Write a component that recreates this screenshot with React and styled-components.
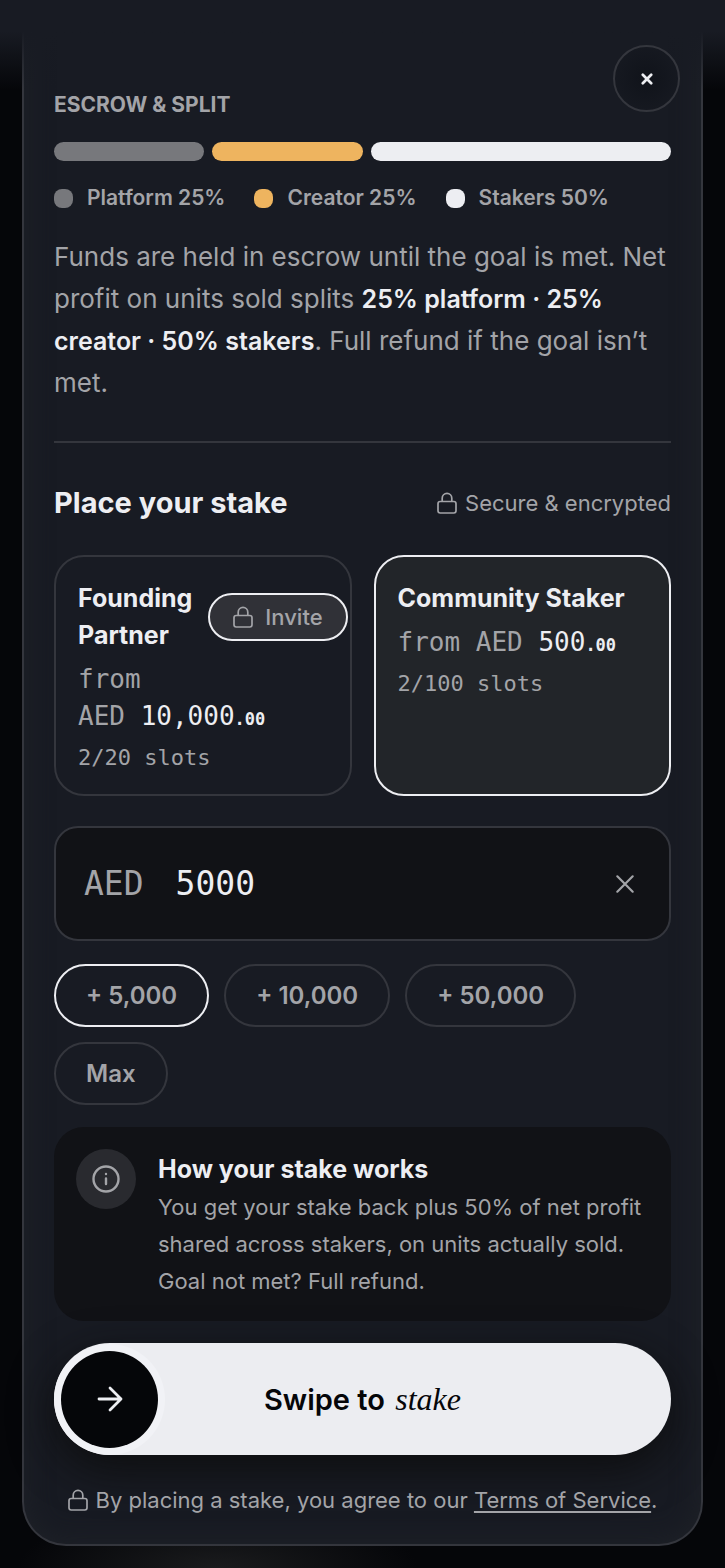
import React, { useState } from "react";
import styled, { createGlobalStyle } from "styled-components";

const colors = {
  page: "#050609",
  panel: "#181b23",
  line: "#34363d",
  well: "#111216",
  text: "#edeef2",
  muted: "#a3a4a8",
  platform: "#77787c",
  creator: "#eeb45f",
};

const sans = `Inter, "Liberation Sans", sans-serif`;
const mono = `"DejaVu Sans Mono", "Liberation Mono", monospace`;

const GlobalStyle = createGlobalStyle`
  * {
    box-sizing: border-box;
  }

  body {
    margin: 0;
    background: ${colors.page};
    color: ${colors.muted};
    font-family: ${sans};
  }

  button, input {
    font-family: inherit;
    color: inherit;
  }

  h2, h3, p {
    margin: 0;
  }
`;

const Page = styled.div`
  position: relative;
  padding: 0 22px 22px;
  background: radial-gradient(ellipse 200px 60px at 30% 100%, #1a1b1d, transparent);
`;

const Panel = styled.main`
  display: flex;
  flex-direction: column;
  padding: 91px 30px 29px;
  border: 2px solid ${colors.line};
  border-top: 0;
  border-radius: 0 0 44px 44px;
  background: ${colors.panel};
  box-shadow: inset 0 0 28px #1f2228;
`;

const TopFade = styled.div`
  position: absolute;
  top: 0;
  left: 0;
  right: 0;
  height: 90px;
  background: linear-gradient(${colors.panel} 35%, transparent);
`;

const CloseBtn = styled.button`
  position: absolute;
  top: 45px;
  right: 45px;
  display: flex;
  align-items: center;
  justify-content: center;
  width: 67px;
  height: 67px;
  padding: 0;
  border: 2px solid ${colors.line};
  border-radius: 50%;
  background: radial-gradient(#10131a, #181b23);
  color: ${colors.text};
`;

const Eyebrow = styled.h2`
  font-size: 21px;
  line-height: 28px;
  font-weight: 700;
  text-transform: uppercase;
`;

const SplitBar = styled.div`
  display: flex;
  gap: 8px;
  margin-top: 23px;
`;

const Segment = styled.div`
  flex: ${(props) => props.$share} 1 0;
  height: 19px;
  border-radius: 10px;
  background: ${(props) => props.$color};
`;

const Legend = styled.div`
  display: flex;
  gap: 29px;
  margin-top: 23px;
  font-size: 21px;
  line-height: 28px;
  font-weight: 600;
`;

const LegendItem = styled.span`
  display: flex;
  align-items: center;
  gap: 14px;
  white-space: nowrap;
`;

const Dot = styled.span`
  width: 19px;
  height: 19px;
  border-radius: 8px;
  background: ${(props) => props.$color};
`;

const Summary = styled.p`
  margin-top: 24px;
  padding-bottom: 37px;
  border-bottom: 2px solid ${colors.line};
  font-size: 26px;
  line-height: 42px;

  strong {
    color: ${colors.text};
    font-size: 25px;
    line-height: 1;
    font-weight: 600;
  }
`;

const StakeHeader = styled.div`
  display: flex;
  align-items: center;
  justify-content: space-between;
  margin-top: 40px;
`;

const StakeTitle = styled.h2`
  color: ${colors.text};
  font-size: 29px;
  line-height: 40px;
  font-weight: 700;
`;

const Secure = styled.span`
  display: flex;
  align-items: center;
  gap: 8px;
  font-size: 22px;
  line-height: 28px;
  white-space: nowrap;
`;

const Tiers = styled.div`
  display: grid;
  grid-template-columns: 1fr 1fr;
  gap: 22px;
  margin-top: 32px;
`;

const Tier = styled.button`
  display: flex;
  flex-direction: column;
  min-width: 0;
  padding: 23px 22px 18px;
  border: 2px solid ${(props) => (props.$active ? colors.text : colors.line)};
  border-radius: 30px;
  background: ${(props) => (props.$active ? "#222529" : "transparent")};
  text-align: left;
`;

const TierTop = styled.span`
  display: flex;
  align-items: center;
  gap: 16px;
  width: 100%;
`;

const TierName = styled.span`
  color: ${colors.text};
  font-size: 25px;
  line-height: 37px;
  font-weight: 700;
`;

const Invite = styled.span`
  display: flex;
  flex-shrink: 0;
  align-items: center;
  gap: 12px;
  height: 48px;
  padding: 0 23px;
  border: 2px solid ${colors.text};
  border-radius: 24px;
  background: #303137;
  font-size: 22px;
  font-weight: 500;
`;

const Price = styled.span`
  margin-top: 7px;
  font-family: ${mono};
  font-size: 26px;
  line-height: 37px;
`;

const Amount = styled.span`
  white-space: nowrap;

  b {
    color: ${colors.text};
    font-weight: 400;
  }

  small {
    color: ${colors.text};
    font-size: 17px;
    line-height: 1;
    font-weight: 700;
  }
`;

const Slots = styled.span`
  margin-top: 4px;
  font-family: ${mono};
  font-size: 22px;
  line-height: 37px;
`;

const AmountField = styled.label`
  display: flex;
  align-items: center;
  gap: 32px;
  height: 115px;
  margin-top: 30px;
  padding: 0 28px;
  border: 2px solid ${colors.line};
  border-radius: 24px;
  background: ${colors.well};
  font-family: ${mono};
  font-size: 33px;
`;

const AmountInput = styled.input`
  flex: 1;
  min-width: 0;
  padding: 0;
  border: 0;
  outline: 0;
  background: none;
  color: ${colors.text};
  font-size: 33px;
`;

const ClearBtn = styled.button`
  display: flex;
  padding: 5px;
  border: 0;
  background: none;
`;

const Chips = styled.div`
  display: flex;
  flex-wrap: wrap;
  gap: 15px;
  margin-top: 23px;
`;

const Chip = styled.button`
  height: 63px;
  padding: 0 30px;
  border: 2px solid ${(props) => (props.$active ? colors.text : colors.line)};
  border-radius: 32px;
  background: none;
  font-size: 24px;
  font-weight: 600;
`;

const Info = styled.section`
  display: flex;
  gap: 22px;
  margin-top: 22px;
  padding: 22px 22px 21px;
  border-radius: 30px;
  background: ${colors.well};
`;

const InfoBadge = styled.span`
  display: flex;
  flex-shrink: 0;
  align-items: center;
  justify-content: center;
  width: 60px;
  height: 60px;
  border-radius: 50%;
  background: #292a2f;
`;

const InfoTitle = styled.h3`
  color: ${colors.text};
  font-size: 25px;
  line-height: 40px;
  font-weight: 700;
`;

const InfoText = styled.p`
  font-size: 22px;
  line-height: 37px;
`;

const Swipe = styled.button`
  display: grid;
  grid-template-columns: 97px 1fr 97px;
  align-items: center;
  height: 112px;
  margin-top: 22px;
  padding: 0 7px;
  border: 0;
  border-radius: 56px;
  background: #ecedf1;
  box-shadow: 0 14px 44px rgba(12, 12, 12, 0.85);
  color: ${colors.page};
  font-size: 29px;
  font-weight: 600;

  em {
    margin-left: 3px;
    font-family: "Liberation Serif", serif;
    font-size: 32px;
    font-weight: 400;
  }
`;

const Knob = styled.span`
  display: flex;
  align-items: center;
  justify-content: center;
  width: 97px;
  height: 97px;
  border-radius: 50%;
  background: ${colors.page};
  box-shadow: 0 0 0 7px #f1f2f6;
  color: ${colors.text};
`;

const Terms = styled.p`
  display: flex;
  align-items: center;
  justify-content: center;
  gap: 8px;
  margin-top: 30px;
  font-size: 22px;
  line-height: 30px;
  white-space: nowrap;

  a {
    color: inherit;
    text-underline-offset: 3px;
  }
`;

const LockIcon = () => (
  <svg width="20" height="22" viewBox="0 0 20 22" fill="none" stroke="currentColor" strokeWidth="1.7">
    <rect x="1" y="9.5" width="18" height="11.5" rx="2.2" />
    <path d="M5.2 9.500V6.200a4.800 4.800 0 0 1 9.600 0v3.300" />
  </svg>
);

const CrossIcon = ({ size, weight }) => (
  <svg width={size} height={size} viewBox="0 0 20 20" fill="none" stroke="currentColor" strokeWidth={weight} strokeLinecap="round">
    <path d="M3 3l14 14M17 3L3 17" />
  </svg>
);

const InfoIcon = () => (
  <svg width="30" height="30" viewBox="0 0 30 30" fill="none" stroke="currentColor" strokeWidth="2.4" strokeLinecap="round">
    <circle cx="15" cy="15" r="12.500" />
    <path d="M15 14.500v5.500M15 10v.1" />
  </svg>
);

const ArrowIcon = () => (
  <svg width="28" height="28" viewBox="0 0 28 28" fill="none" stroke="currentColor" strokeWidth="2.8" strokeLinecap="round" strokeLinejoin="round">
    <path d="M3 14h22M14 3l11 11-11 11" />
  </svg>
);

const split = [
  { name: "Platform", share: 25, color: colors.platform },
  { name: "Creator", share: 25, color: colors.creator },
  { name: "Stakers", share: 50, color: colors.text },
];

const tiers = [
  { name: "Founding Partner", price: "10,000", slots: "2/20 slots", invite: true },
  { name: "Community Staker", price: "500", slots: "2/100 slots" },
];

const chips = ["+ 5,000", "+ 10,000", "+ 50,000", "Max"];

const App = () => {
  const [tier, setTier] = useState("Community Staker");
  const [chip, setChip] = useState("+ 5,000");
  const [amount, setAmount] = useState("5000");

  return (
    <>
      <GlobalStyle />
      <Page>
        <Panel>
          <Eyebrow>Escrow &amp; split</Eyebrow>
          <SplitBar>
            {split.map((s) => (
              <Segment key={s.name} $share={s.share} $color={s.color} />
            ))}
          </SplitBar>
          <Legend>
            {split.map((s) => (
              <LegendItem key={s.name}>
                <Dot $color={s.color} />
                {`${s.name} ${s.share}%`}
              </LegendItem>
            ))}
          </Legend>
          <Summary>
            Funds are held in escrow until the goal is met. Net profit on units sold splits{" "}
            <strong>25% platform · 25% creator · 50% stakers</strong>. Full refund if the goal isn’t met.
          </Summary>

          <StakeHeader>
            <StakeTitle>Place your stake</StakeTitle>
            <Secure>
              <LockIcon />
              Secure &amp; encrypted
            </Secure>
          </StakeHeader>

          <Tiers>
            {tiers.map((t) => (
              <Tier key={t.name} type="button" $active={tier === t.name} onClick={() => setTier(t.name)}>
                <TierTop>
                  <TierName>{t.name}</TierName>
                  {t.invite && (
                    <Invite>
                      <LockIcon />
                      Invite
                    </Invite>
                  )}
                </TierTop>
                <Price>
                  from{" "}
                  <Amount>
                    AED <b>{t.price}</b>
                    <small>.00</small>
                  </Amount>
                </Price>
                <Slots>{t.slots}</Slots>
              </Tier>
            ))}
          </Tiers>

          <AmountField>
            AED
            <AmountInput inputMode="numeric" value={amount} onChange={(e) => setAmount(e.target.value)} />
            <ClearBtn type="button" aria-label="Clear amount" onClick={() => setAmount("")}>
              <CrossIcon size={22} weight="2" />
            </ClearBtn>
          </AmountField>

          <Chips>
            {chips.map((c) => (
              <Chip key={c} type="button" $active={chip === c} onClick={() => setChip(c)}>
                {c}
              </Chip>
            ))}
          </Chips>

          <Info>
            <InfoBadge>
              <InfoIcon />
            </InfoBadge>
            <div>
              <InfoTitle>How your stake works</InfoTitle>
              <InfoText>
                You get your stake back plus 50% of net profit shared across stakers, on units actually sold. Goal not
                met? Full refund.
              </InfoText>
            </div>
          </Info>

          <Swipe type="button">
            <Knob>
              <ArrowIcon />
            </Knob>
            <span>
              Swipe to <em>stake</em>
            </span>
          </Swipe>

          <Terms>
            <LockIcon />
            <span>
              By placing a stake, you agree to our <a href="#terms">Terms of Service</a>.
            </span>
          </Terms>
        </Panel>
        <TopFade />
        <CloseBtn type="button" aria-label="Close">
          <CrossIcon size={12} weight="4.5" />
        </CloseBtn>
      </Page>
    </>
  );
};

export default App;
